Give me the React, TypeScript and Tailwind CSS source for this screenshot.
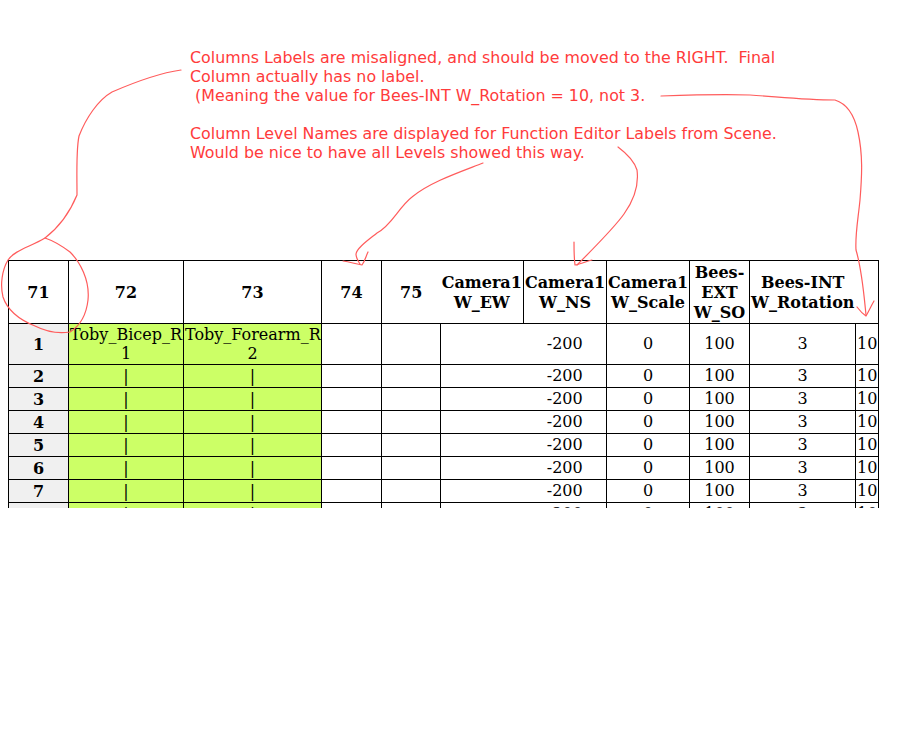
const serif = "font-['DejaVu_Serif',serif]";

const headers = ["71", "72", "73", "74", "75"];
const rows = [1, 2, 3, 4, 5, 6, 7, 8, 9, 10];

const Th = ({ children, className = "" }: { children?: React.ReactNode; className?: string }) => (
  <th className={`border border-black px-px pt-[2px] pb-0 text-center align-middle text-base/[20px] font-bold text-black ${className}`}>
    {children}
  </th>
);

const Td = ({ children, className = "" }: { children?: React.ReactNode; className?: string }) => (
  <td className={`border border-black p-px text-center align-middle text-base/[19px] whitespace-nowrap text-black ${className}`}>
    {children}
  </td>
);

const Num = ({ children, className = "" }: { children?: React.ReactNode; className?: string }) => (
  <td className={`border border-black px-px pt-0 pb-[2px] text-center align-middle text-base/[19px] whitespace-nowrap text-black ${className}`}>
    {children}
  </td>
);

const Notes = () => (
  <div className="h-[260px] pt-[48px] pl-[190px] font-['DejaVu_Sans',sans-serif] text-[15.85px]/[19px] whitespace-pre text-[#ff3b3b]">
    <div>Columns Labels are misaligned, and should be moved to the RIGHT.  Final</div>
    <div>Column actually has no label.</div>
    <div> (Meaning the value for Bees-INT W_Rotation = 10, not 3.</div>
    <div className="h-[19px]" />
    <div>Column Level Names are displayed for Function Editor Labels from Scene.</div>
    <div>Would be nice to have all Levels showed this way.</div>
  </div>
);

const Scribbles = () => (
  <svg
    width="914"
    height="750"
    viewBox="0 0 914 750"
    fill="none"
    stroke="#ff5c5c"
    strokeWidth="1.2"
    strokeLinecap="round"
    strokeLinejoin="round"
    className="pointer-events-none absolute top-0 left-0"
  >
    <path d="M181 70C160 73 135 82 112 92C98 100 86 118 79 136C76 150 77 175 77 195C70 212 58 228 45 238" />
    <path d="M45 238C30 247 15 250 8 260C2 270 0 285 3 297C8 312 20 320 35 326C45 331 58 334 70 332C78 327 86 318 88 300C90 280 80 262 70 252C62 246 54 241 45 238Z" />
    <path d="M483 163C460 172 430 182 412 197C398 208 392 225 377 233C367 241 357 248 356 254C356 258 358 261 360 264" />
    <path d="M343 261C350 262 356 264 362 265C365 261 366 256 368 252" />
    <path d="M618 147C626 153 634 160 637 170C639 185 634 200 624 214C614 228 594 248 577 265" />
    <path d="M574 242C574 250 574 258 575 265C581 264 587 261 592 260" />
    <path d="M661 96C690 95 720 94 750 95C780 97 805 100 835 100C848 104 855 118 858 132C863 155 862 175 860 200C858 220 855 235 856 250C862 270 864 295 866 315" />
    <path d="M857 307C860 311 863 314 866 316C869 311 871 306 874 301" />
  </svg>
);

export default function App() {
  return (
    <div className={`relative h-[750px] w-[914px] overflow-hidden bg-white ${serif}`}>
      <Notes />
      <div className="ml-2 h-[248px] w-[871px] overflow-hidden">
        <table className="w-[870px] table-fixed border-collapse">
          <colgroup>
            <col className="w-[60px]" />
            <col className="w-[115px]" />
            <col className="w-[138px]" />
            <col className="w-[60px]" />
            <col className="w-[59px]" />
            <col className="w-[83px]" />
            <col className="w-[83px]" />
            <col className="w-[83px]" />
            <col className="w-[60px]" />
            <col className="w-[106px]" />
            <col className="w-[23px]" />
          </colgroup>
          <thead>
            <tr className="h-[63px]">
              {headers.map((h) => (
                <Th key={h} className={h === "75" ? "border-r-0" : ""}>
                  {h}
                </Th>
              ))}
              <Th className="border-l-0">
                Camera1
                <br />
                W_EW
              </Th>
              <Th>
                Camera1
                <br />
                W_NS
              </Th>
              <Th>
                Camera1
                <br />
                W_Scale
              </Th>
              <Th>
                Bees-
                <br />
                EXT
                <br />
                W_SO
              </Th>
              <Th className="border-r-0 whitespace-nowrap">
                Bees-INT
                <br />
                W_Rotation
              </Th>
              <Th className="border-l-0" />
            </tr>
          </thead>
          <tbody>
            {rows.map((n) => (
              <tr key={n} className={n === 1 ? "h-[41px]" : "h-[23px]"}>
                <Td className="bg-[#f0f0f0] font-bold">{n}</Td>
                <Td className="overflow-visible bg-[#ccff66]">
                  {n === 1 ? (
                    <>
                      Toby_Bicep_R
                      <br />1
                    </>
                  ) : (
                    "|"
                  )}
                </Td>
                <Td className="overflow-visible bg-[#ccff66]">
                  {n === 1 ? (
                    <>
                      Toby_Forearm_R
                      <br />2
                    </>
                  ) : (
                    "|"
                  )}
                </Td>
                <Td />
                <Td />
                <Td className="border-r-0" />
                <Num className="border-l-0">-200</Num>
                <Num>0</Num>
                <Num>100</Num>
                <Num>3</Num>
                <Num className="px-0">10</Num>
              </tr>
            ))}
          </tbody>
        </table>
      </div>
      <Scribbles />
    </div>
  );
}
